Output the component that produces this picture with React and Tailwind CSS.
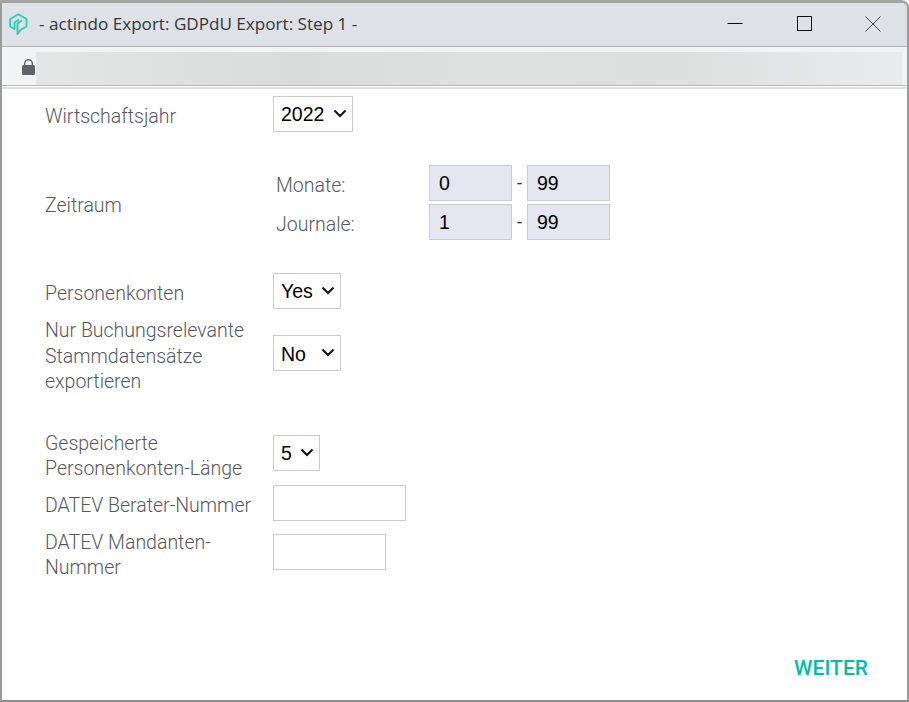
import React from "react";

const fieldFont = "text-[19.5px] text-black font-['Liberation_Sans',sans-serif] outline-none";
const inputCls = `h-9 border border-[#cccccc] px-[9px] ${fieldFont}`;
const labelCls = "w-[228px] shrink-0 pt-[6px] text-[19.5px] font-light leading-[25.5px] text-[#55585d]";

function Row({ label, className = "", children }) {
  return (
    <div className={`flex items-center ${className}`}>
      <div className={labelCls}>{label}</div>
      {children}
    </div>
  );
}

function Select({ value, width }) {
  return (
    <div className={`relative ${width}`}>
      <select defaultValue={value} className={`h-9 w-full appearance-none border border-[#cccccc] bg-white pl-[7px] pt-[2px] ${fieldFont}`}>
        <option>{value}</option>
      </select>
      <svg width="14" height="9" viewBox="0 0 14 9" fill="none" stroke="#111" strokeWidth="2" className="pointer-events-none absolute right-[6px] top-[13px]">
        <path d="M1.5 1.5 L7 7 L12.5 1.5" />
      </svg>
    </div>
  );
}

function RangeRow({ label, from, to }) {
  return (
    <div className="flex items-center">
      <div className="w-[156px] shrink-0 pl-[3px] pt-[6px] text-[19.5px] font-light text-[#55585d]">{label}</div>
      <input readOnly value={from} className={`${inputCls} w-[83px] bg-[#e4e6f2]`} />
      <div className="w-[15px] text-center text-[18px] font-['Liberation_Sans',sans-serif] text-[#333]">-</div>
      <input readOnly value={to} className={`${inputCls} w-[83px] bg-[#e4e6f2]`} />
    </div>
  );
}

function Logo() {
  return (
    <svg width="19" height="23" viewBox="0 0 19 23" fill="none" stroke="#2ad0b4" strokeWidth="1.9" strokeLinejoin="round" className="mt-[2px] shrink-0">
      <path d="M6 16.5 L1.2 13.5 V6 L9.5 1.2 L17.5 6 V13.5 L11.5 17 L8.5 21 V10.5 L13 7.5" />
      <path d="M5.5 16 V9.5 L10 6.5" />
    </svg>
  );
}

export default function App() {
  return (
    <div className="h-[702px] w-[909px] overflow-hidden rounded-tr-[8px] border-x-2 border-t-[3px] border-b-2 border-x-[#9a9a9a] border-t-[#a3a3a3] border-b-[#8f8f8f] bg-white font-['Roboto',sans-serif]">
      {/* title bar */}
      <div className="flex h-[44px] items-center border-b border-[#b3b3b3] bg-[#dee1e6] pb-[2px] pl-[7px]">
        <Logo />
        <div className="ml-[11px] text-[17.1px] text-[#33363a] font-['Open_Sans',sans-serif]">- actindo Export: GDPdU Export: Step 1 -</div>
        <div className="ml-auto flex items-center">
          <svg width="16" height="16" viewBox="0 0 16 16" className="mr-[53px]" stroke="#111" fill="none">
            <path d="M0.5 7.5 H15.5" />
          </svg>
          <svg width="16" height="16" viewBox="0 0 16 16" className="mr-[53px]" stroke="#111" fill="none">
            <rect x="1.5" y="0.5" width="14" height="14" />
          </svg>
          <svg width="16" height="16" viewBox="0 0 16 16" className="mr-[26px]" stroke="#444" fill="none">
            <path d="M0.5 0.5 L15.5 15.5 M15.5 0.5 L0.5 15.5" />
          </svg>
        </div>
      </div>

      {/* address bar */}
      <div className="flex h-[39px] items-end border-b border-[#b8b8b8] bg-[#f1f3f4] pl-[20px] pr-[5px]">
        <svg width="13" height="16" viewBox="0 0 13 16" fill="#5f6368" className="mb-[10px] mr-[1px] shrink-0">
          <path d="M2 6.5 V4.5 a4.5 4.5 0 0 1 9 0 V6.5 H9.6 V4.5 a3.1 3.1 0 0 0 -6.2 0 V6.5 Z" />
          <rect x="0" y="6" width="13" height="10" rx="1.5" />
        </svg>
        <div className="h-[33px] flex-1 bg-[linear-gradient(90deg,#e4e5e5_0%,#dadbdb_30%,#dfe0e0_50%,#dedfdf_75%,#eaebec_100%)]" />
      </div>
      <div className="h-[3px] border-t border-white bg-[#e0e2e2]" />

      {/* form */}
      <div className="pl-[43px] pt-[7px]">
        <Row label="Wirtschaftsjahr">
          <Select value="2022" width="w-[80px]" />
        </Row>

        <Row label="Zeitraum" className="mt-[33px]">
          <div className="flex flex-col gap-[3px]">
            <RangeRow label="Monate:" from="0" to="99" />
            <RangeRow label="Journale:" from="1" to="99" />
          </div>
        </Row>

        <Row label="Personenkonten" className="mt-[33px]">
          <Select value="Yes" width="w-[68px]" />
        </Row>

        <Row label={<>Nur Buchungsrelevante<br />Stammdatensätze<br />exportieren</>} className="mt-[3px]">
          <Select value="No" width="w-[68px]" />
        </Row>

        <Row label={<>Gespeicherte<br />Personenkonten-Länge</>} className="mt-[30px]">
          <Select value="5" width="w-[47px]" />
        </Row>

        <Row label="DATEV Berater-Nummer" className="mt-[3.5px]">
          <input className={`${inputCls} w-[133px] bg-white`} />
        </Row>

        <Row label={<>DATEV Mandanten-<br />Nummer</>} className="mt-[2.5px]">
          <input className={`${inputCls} w-[113px] bg-white`} />
        </Row>

        <div className="mt-[72px] pr-[39px] text-right text-[21px] font-medium text-[#00bfa5]">WEITER</div>
      </div>
    </div>
  );
}
